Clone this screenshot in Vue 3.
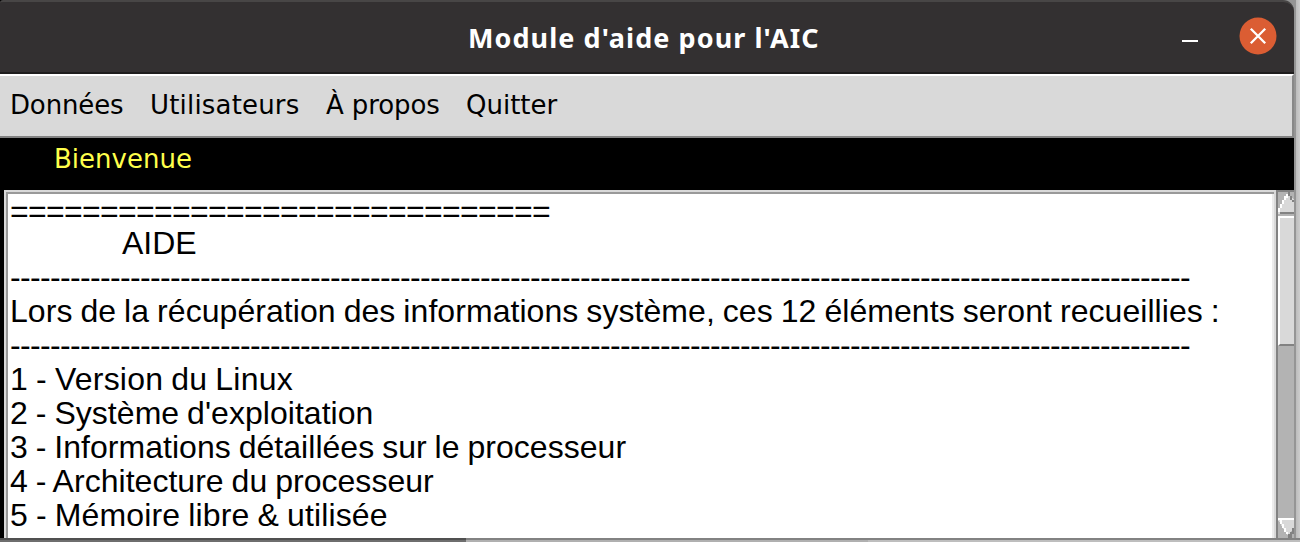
<script setup>
const menus = [
  { label: 'Données', cls: 'm1' },
  { label: 'Utilisateurs', cls: 'm2' },
  { label: 'À propos', cls: 'm3' },
  { label: 'Quitter', cls: 'm4' },
]
const lines = [
  { text: '='.repeat(30), cls: 'double' },
  { text: 'AIDE', cls: 'heading' },
  { text: '-'.repeat(118), cls: 'dashes' },
  { text: 'Lors de la récupération des informations système, ces 12 éléments seront recueillies :', cls: 'intro' },
  { text: '-'.repeat(118), cls: 'dashes' },
  { text: '1 - Version du Linux', cls: 'i1' },
  { text: "2 - Système d'exploitation", cls: 'i2' },
  { text: '3 - Informations détaillées sur le processeur', cls: 'i3' },
  { text: '4 - Architecture du processeur', cls: 'i4' },
  { text: '5 - Mémoire libre & utilisée', cls: 'i5' },
]
</script>

<template>
  <div class="desktop">
    <div class="window">
      <header class="titlebar">
        <span class="title">Module d'aide pour l'AIC</span>
        <div class="controls">
          <svg class="minimize" width="16" height="2" shape-rendering="crispEdges"><rect width="16" height="2" fill="#fff" /></svg>
          <svg class="close" width="38" height="38" viewBox="0 0 38 38">
            <circle cx="19" cy="19" r="18.5" fill="#db5d33" />
            <path d="M11.8 11.8 26.2 26.2M26.2 11.8 11.8 26.2" stroke="#fff" stroke-width="2.3" />
          </svg>
        </div>
      </header>
      <nav class="menubar">
        <span v-for="m in menus" :key="m.label" :class="m.cls">{{ m.label }}</span>
      </nav>
      <div class="welcome"><span>Bienvenue</span></div>
      <main class="body">
        <div class="text">
          <div v-for="(l, i) in lines" :key="i" class="line" :class="l.cls">{{ l.text }}</div>
        </div>
        <div class="scrollbar">
          <svg width="16" height="24" shape-rendering="crispEdges">
            <rect width="16" height="24" fill="#b3b3b3" />
            <path d="M10 2 0 20V22H16V8Z" fill="#d9d9d9" />
            <path d="M10 0H12V4H14V8H16V10H14V8H12V4H10Z" fill="#828282" />
            <path d="M8 2h2v4H8v2H6v4H4v4H2v4H0v-4h2v-4h2v-4h2V4h2z" fill="#fff" />
            <rect y="20" x="2" width="14" height="2" fill="#828282" />
          </svg>
          <div class="thumb"></div>
          <svg class="down" width="16" height="20" shape-rendering="crispEdges">
            <path d="M0 2H16V10L10 18Z" fill="#d9d9d9" />
            <rect width="16" height="2" fill="#fff" />
            <path d="M2 2h2v2H2zM2 4h2v2H2zM4 6h2v4H4zM6 10h2v4H6zM8 14h2v2H8z" fill="#fff" />
            <path d="M16 10h-2v4h-2v2h-2v4h4v-4h2z" fill="#828282" />
          </svg>
        </div>
      </main>
    </div>
    <footer class="below"><i class="dark"></i><i class="mid"></i><i class="light"></i></footer>
  </div>
</template>

<style>
body { margin: 0; overflow: hidden; }
</style>

<style scoped>
.desktop {
  width: 1300px; height: 542px; box-sizing: border-box; overflow: hidden;
  background: linear-gradient(90deg, #000 0 20px, #959595 1290px 1296px, #bcbcbc 1296px, #cdcdcd 1300px);
}
.window { width: 1294px; height: 538px; display: flex; flex-direction: column; }
.titlebar {
  height: 74px; box-sizing: border-box; flex: none; background: #333031;
  border-top: 2px solid #484646; border-bottom: 2px solid #1e1d1d;
  border-radius: 3px 11px 0 0; display: grid; grid-template-columns: 468px 1fr auto; color: #fff;
}
.title {
  grid-column: 2; font: 700 27px/71px "Noto Sans", sans-serif; letter-spacing: 1.06px; white-space: nowrap;
}
.controls { display: flex; padding-right: 17px; gap: 41px; }
.minimize { margin-top: 38px; }
.close { margin-top: 15px; }
.menubar {
  height: 64px; box-sizing: border-box; flex: none; background: #d9d9d9; color: #000;
  border-top: 2px solid #fff; border-right: 2px solid #888; border-bottom: 2px solid #828282;
  padding-left: 10px; display: flex; font: 26px/59px "DejaVu Sans", sans-serif;
}
.menubar > span { white-space: nowrap; }
.m1 { width: 140px; letter-spacing: -0.15px; }
.m2 { width: 176px; letter-spacing: 0.18px; }
.m3 { width: 140px; letter-spacing: -0.1px; }
.welcome {
  height: 52px; flex: none; background: #000; color: #ffff4b;
  padding-left: 54px; font: 26px/43px "DejaVu Sans", sans-serif;
}
.body { flex: 1; min-height: 0; display: flex; padding-left: 4px; background: #000; }
.text {
  width: 1272px; flex: none; box-sizing: border-box; background: #fff; color: #000; overflow: hidden;
  border: 2px solid #d9d9d9; border-bottom: 0;
  box-shadow: inset 2px 2px #999, inset -2px 0 #ececec;
  padding: 3px 0 0 4px; font: 32px/34px "Liberation Sans", Arial, sans-serif;
}
.line { height: 34px; white-space: pre; word-spacing: -1px; }
.double { height: 31px; line-height: 32px; letter-spacing: -0.69px; }
.dashes { letter-spacing: -0.656px; }
.heading { padding-left: 112px; }
.intro { letter-spacing: 0.06px; }
.i1 { letter-spacing: 0.2px; }
.i2 { letter-spacing: 0.04px; }
.i3 { letter-spacing: 0.03px; }
.i4 { letter-spacing: 0.03px; }
.i5 { letter-spacing: 0.14px; }
.scrollbar {
  width: 18px; flex: none; box-sizing: border-box; background: #b3b3b3;
  border-left: 2px solid #828282; border-top: 2px solid #828282; display: flex; flex-direction: column;
}
.scrollbar svg { display: block; flex: none; }
.thumb {
  height: 130px; flex: none; box-sizing: border-box; background: #d9d9d9;
  border-top: 2px solid #fff; border-left: 2px solid #fff; border-bottom: 2px solid #828282;
}
.down { margin-top: auto; }
.below { height: 4px; display: flex; }
.below i { border-top: 2px solid #828282; height: 2px; }
.below .dark { width: 466px; background: #6e6e6e; border-top-color: #505050; }
.mid { width: 402px; background: #b0b0b0; }
.light { flex: 1; background: #bebebe; }
</style>
